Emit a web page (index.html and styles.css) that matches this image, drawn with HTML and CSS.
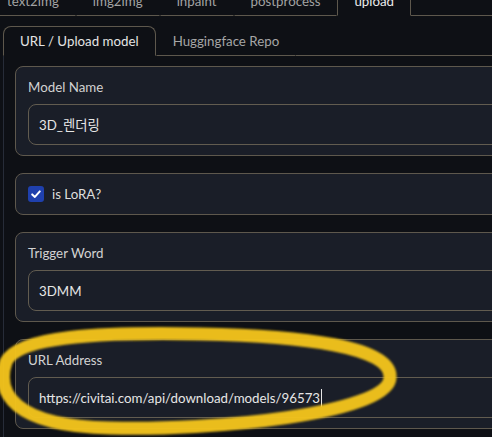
FILE: index.html
```html
<!DOCTYPE html>
<html lang="ko">
<head>
<meta charset="utf-8">
<title>upload</title>
<link rel="stylesheet" href="styles.css">
</head>
<body>
<div class="page">
  <nav class="top-tabs">
    <span class="top-tab">text2img</span>
    <span class="top-tab">img2img</span>
    <span class="top-tab">inpaint</span>
    <span class="top-tab">postprocess</span>
    <span class="top-tab active">upload</span>
    <span class="top-fill"></span>
  </nav>
  <div class="sub-tabs">
    <span class="sub-tab active">URL / Upload model</span>
    <span class="sub-tab">Huggingface Repo</span>
    <span class="sub-fill"></span>
  </div>
  <div class="tab-body">
    <div class="block">
      <div class="block-label">Model Name</div>
      <div class="input">3D_렌더링</div>
    </div>
    <div class="block check-block">
      <span class="checkbox"><svg viewBox="0 0 16 16" width="16" height="16"><path d="M4.2 8.4 L6.9 10.9 L11.8 5.4" fill="none" stroke="#ffffff" stroke-width="2" stroke-linecap="round" stroke-linejoin="round"/></svg></span>
      <span class="check-label">is LoRA?</span>
    </div>
    <div class="block">
      <div class="block-label">Trigger Word</div>
      <div class="input">3DMM</div>
    </div>
    <div class="block">
      <div class="block-label">URL Address</div>
      <div class="input">https://civitai.com/api/download/models/96573<span class="caret"></span></div>
    </div>
  </div>
</div>
<svg class="highlight" viewBox="0 0 492 437" width="492" height="437">
  <defs><filter id="soft"><feGaussianBlur stdDeviation="0.9"/></filter></defs>
  <path d="M 390 378 C 393 346, 300 336, 200 334 C 100 332, 18 336, 6 362 C -4 392, 12 426, 110 428 C 210 431, 388 414, 390 378 Z" fill="none" stroke="#f3c41f" stroke-width="13" stroke-linecap="round" opacity="0.96" filter="url(#soft)"/>
</svg>
</body>
</html>
```

FILE: styles.css
```css
html, body {
  margin: 0;
  padding: 0;
  background: #0e1015;
  overflow: hidden;
  width: 492px;
  height: 437px;
}
body {
  position: relative;
  font-family: Lato, "Noto Sans", "Noto Sans CJK KR", sans-serif;
  font-size: 13.3px;
  color: #d4d4d4;
}
.page {
  width: 720px;
}
.top-tabs {
  display: flex;
  height: 30px;
  margin-top: -14px;
  margin-left: -10px;
}
.top-tab {
  display: flex;
  align-items: center;
  padding: 0 16px;
  border: 1px solid transparent;
  border-bottom-color: #5e584d;
  color: #a3a3a3;
}
.top-tab.active {
  border-color: #5e584d;
  border-bottom-color: transparent;
  color: #ececec;
}
.top-fill {
  flex: 1;
  border-bottom: 1px solid #5e584d;
}
.sub-tabs {
  display: flex;
  height: 30px;
  margin-top: 10px;
  margin-left: 3px;
}
.sub-tab {
  display: flex;
  align-items: center;
  padding: 0 16px;
  border: 1px solid transparent;
  border-bottom-color: #5e584d;
  color: #a6a6a6;
}
.sub-tab.active {
  border-color: #5e584d;
  border-bottom-color: transparent;
  border-radius: 8px 8px 0 0;
  color: #e4e4e4;
}
.sub-fill {
  flex: 1;
  border-bottom: 1px solid #5e584d;
}
.tab-body {
  display: flex;
  flex-direction: column;
  gap: 17px;
  margin-left: 3px;
  padding: 10px 0 20px 11px;
  border-left: 1px solid #272c38;
}
.block {
  background: #1a1e28;
  border: 1px solid #5e584d;
  border-radius: 8px;
  padding: 11px 12px 10px 12px;
}
.block-label {
  line-height: 18px;
  margin-bottom: 8px;
  color: #d2d2d2;
}
.input {
  box-sizing: border-box;
  height: 41px;
  display: flex;
  align-items: center;
  padding: 0 10px;
  border: 1px solid #625c50;
  border-radius: 8px;
  background: #1a1e28;
  color: #e6e6e6;
}
.caret {
  display: inline-block;
  width: 1px;
  height: 18px;
  background: #e6e6e6;
  margin-left: 1px;
}
.check-block {
  display: flex;
  align-items: center;
  height: 18px;
  padding: 11px 12px;
}
.checkbox {
  display: flex;
  width: 16px;
  height: 16px;
  border-radius: 3px;
  background: #1f40ad;
}
.check-label {
  margin-left: 8px;
  color: #dedede;
  line-height: 18px;
}
.highlight {
  position: absolute;
  left: 0;
  top: 0;
  pointer-events: none;
}
```
